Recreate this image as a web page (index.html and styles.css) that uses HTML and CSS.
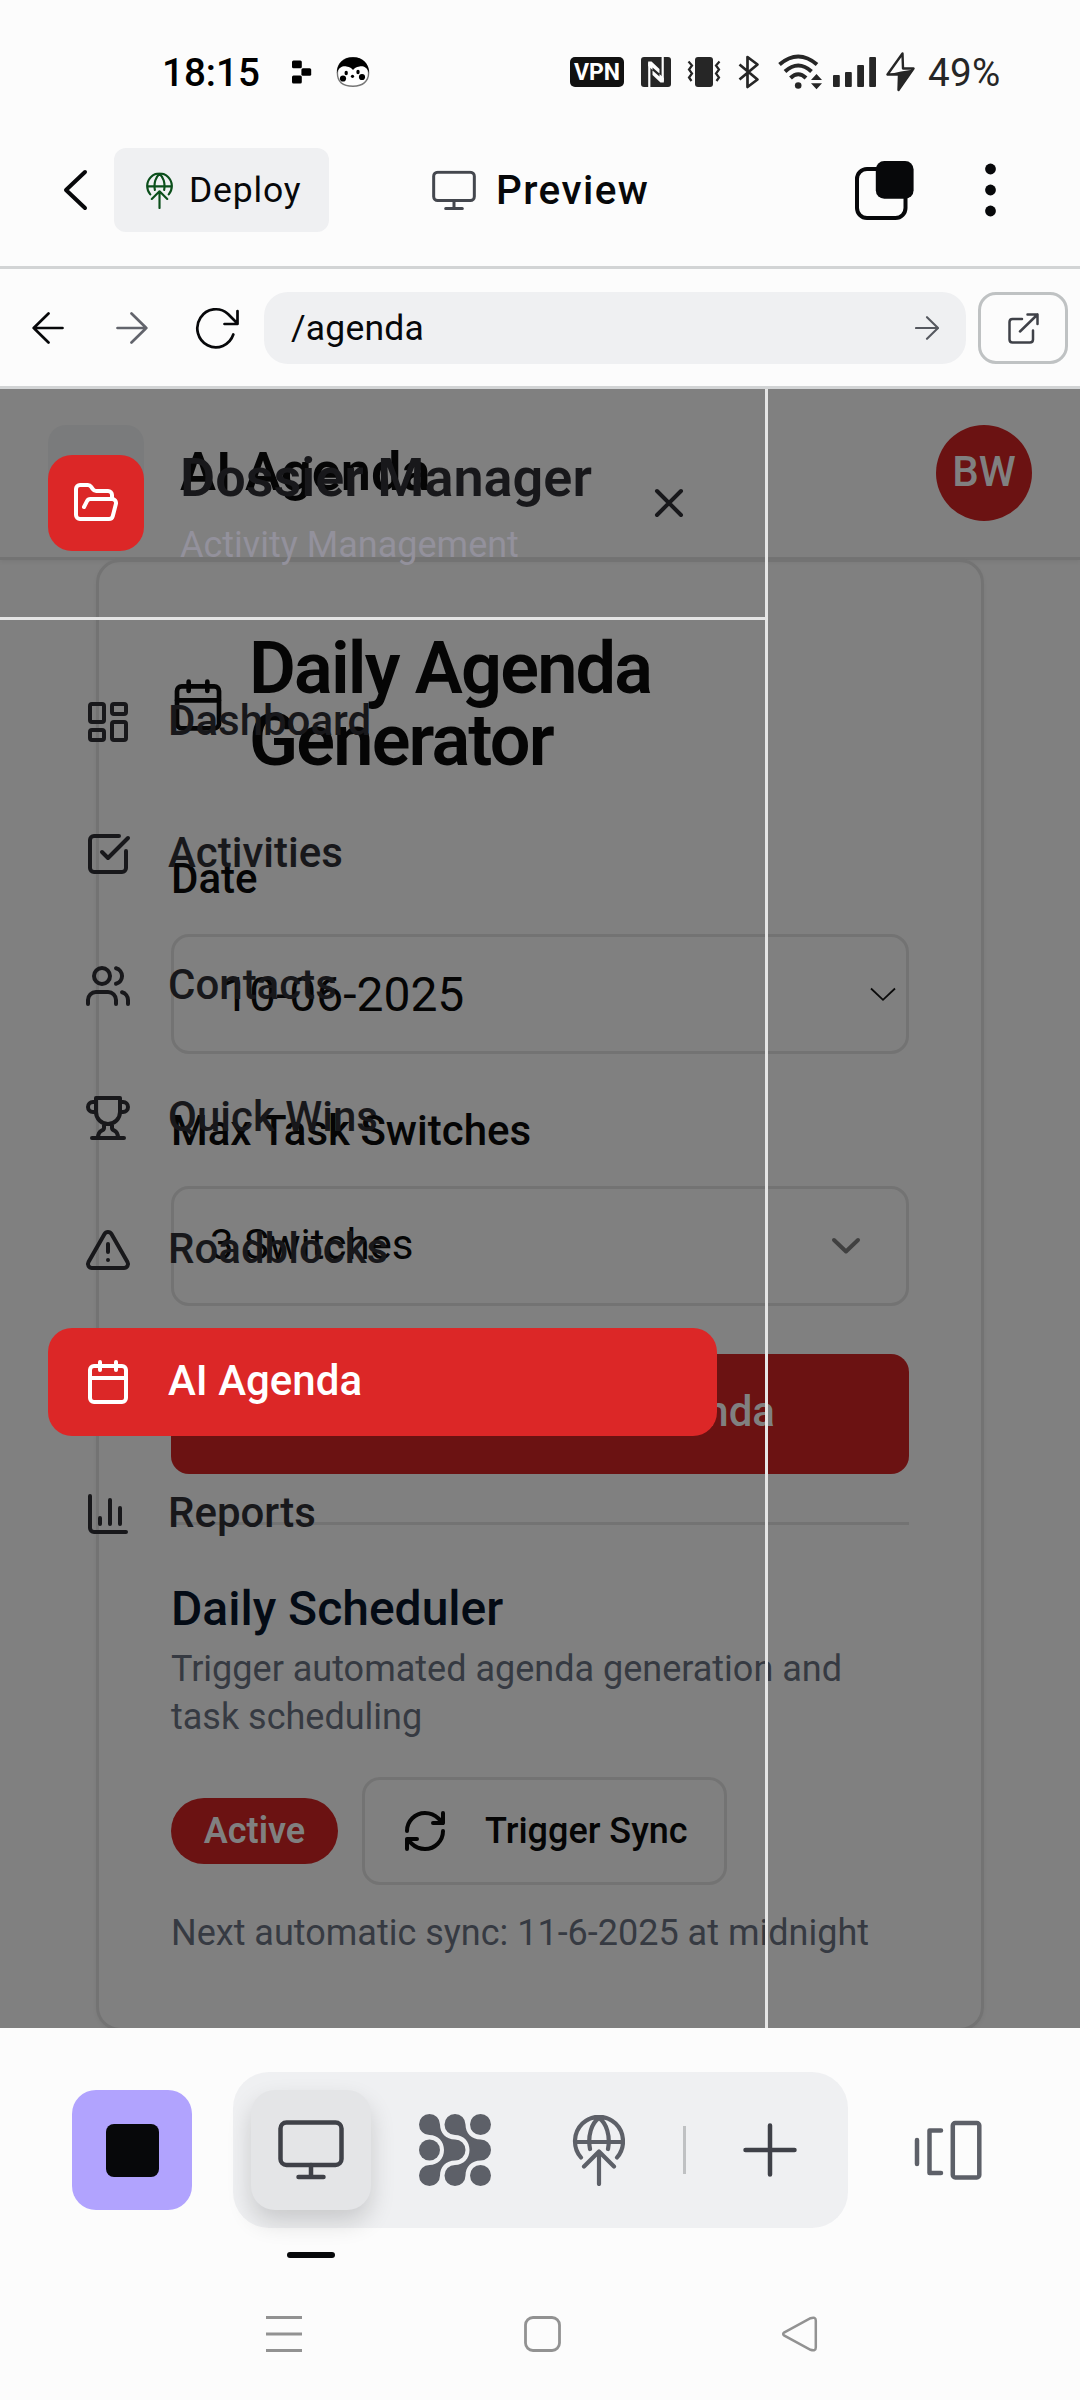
FILE: index.html
```html
<!DOCTYPE html>
<html lang="en">
<head>
<meta charset="utf-8">
<title>Preview</title>
<link rel="stylesheet" href="styles.css">
</head>
<body>
<div class="phone">
  <header class="status">
    <span class="time">18:15</span>
    <svg class="ic-dots" width="20" height="24" viewBox="0 0 20 24"><rect x="0" y="0.5" width="9.8" height="7.8" rx="1.5"/><rect x="9.4" y="8.2" width="9.8" height="7.6" rx="1.5"/><rect x="0" y="15.6" width="9.8" height="7.8" rx="1.5"/></svg>
    <svg class="ic-face" width="34" height="30" viewBox="0 0 34 30"><path d="M17 .8C27 .8 32.6 8 32.6 16S27 29.2 17 29.2 1.4 25 1.4 16 7 .8 17 .8z" fill="#fff" stroke="#777" stroke-width="1.4"/><path d="M.9 16C.9 6.500 7.500.3 17 .3S33.100 6.500 33.100 16C31 10 27 8.800 23.500 9.500 20 10 18.500 11 17 13 15.500 11 14 10 10.500 9.500 7 8.800 3 10 .9 16z"/><circle cx="7" cy="21.500" r="3.100"/><circle cx="26" cy="20" r="3.100"/><ellipse cx="10.200" cy="16" rx="1.700" ry="2.300"/><ellipse cx="22" cy="15" rx="1.700" ry="2.300"/><circle cx="16.500" cy="19.300" r="1.600"/></svg>
    <span class="vpn">VPN</span>
    <svg class="ic-nfc" width="30" height="30" viewBox="0 0 30 30"><rect width="30" height="30" rx="3" fill="#262626"/><path d="M8.300 30V5.500M21.700 0V24.500" fill="none" stroke="#fcfcfc" stroke-width="2.200"/><path d="M7.200 4.500H10.500L18.500 12V16.500L11.500 10.500V13L7.200 9zM22.800 25.500H19.500L11.500 18V13.500L18.500 19.500V17L22.800 21z" fill="#fcfcfc"/></svg>
    <svg class="ic-vib" width="34" height="30" viewBox="0 0 34 30"><rect x="8" width="18" height="30" rx="3" fill="#262626"/><path d="M1.500 4.500L5 8.500 2 12.500 5 16.500 2 20.500 4.500 24M32.500 4.500L29 8.500 32 12.500 29 16.500 32 20.500 29.500 24" fill="none" stroke="#262626" stroke-width="2.200"/></svg>
    <svg class="ic-bt" width="22" height="34" viewBox="0 0 22 34"><path d="M1.500 9.500L19.500 24.500 9.500 32V2L19.500 9.500 1.500 24.500" fill="none" stroke="#262626" stroke-width="2.700" stroke-linejoin="round"/></svg>
    <svg class="ic-wifi" width="45" height="36" viewBox="0 0 45 36"><g fill="none" stroke="#262626" stroke-width="4"><path d="M1.500 10.500Q20.200-5.500 39 10.500"/><path d="M7 17.500Q20.200 5.500 33.500 17.500"/><path d="M12.500 24Q20.200 16.500 28 24"/></g><circle cx="20.200" cy="31.500" r="3.300" fill="#262626"/><path d="M38.500 20l5.500 6H33zM38.500 35.200l5.500-6H33z" fill="#262626"/></svg>
    <svg class="ic-sig" width="43" height="30" viewBox="0 0 43 30" fill="#262626"><rect y="18" width="6.800" height="12" rx="1"/><rect x="12" y="15" width="6.800" height="15" rx="1"/><rect x="24.200" y="8" width="6.800" height="22" rx="1"/><rect x="36.200" width="6.800" height="30" rx="1"/></svg>
    <svg class="ic-bolt" width="30" height="40" viewBox="0 0 30 40"><path d="M16.500 1.500L1.500 22.500 13 22.500 12.500 38 27.500 16.500 17 16.500z" fill="none" stroke="#262626" stroke-width="2.400" stroke-linejoin="round"/><path d="M1.500 22.500H13L12.500 38.500 27.500 17.500 15 19.500z" fill="#262626"/></svg>
    <span class="battery">49%</span>
  </header>

  <div class="appbar">
    <svg class="ic-back" width="25" height="42" viewBox="0 0 25 42" fill="none" stroke="#07080a" stroke-width="4" stroke-linecap="round" stroke-linejoin="round"><path d="M22 3L3 21 22 39"/></svg>
    <div class="deploy">
      <svg width="28" height="37" viewBox="-1 -1 54 72"><use href="#globe-up" stroke="#0b4f1b"/></svg>
      <span>Deploy</span>
    </div>
    <svg class="ic-mon" width="44" height="41" viewBox="0 0 66 60"><use href="#monitor" stroke="#44474e"/></svg>
    <span class="title">Preview</span>
    <svg class="ic-tabs" width="59" height="59" viewBox="0 0 59 59"><rect x="2" y="8" width="48.500" height="49" rx="10" fill="none" stroke="#07080a" stroke-width="4"/><rect x="20.800" width="37.800" height="37.700" rx="8.500" fill="#07080a"/></svg>
    <svg class="ic-more" width="11" height="54" viewBox="0 0 11 54" fill="#07080a"><circle cx="5.500" cy="6" r="5.400"/><circle cx="5.500" cy="27" r="5.400"/><circle cx="5.500" cy="48" r="5.400"/></svg>
  </div>

  <div class="urlbar">
    <svg class="ic-prev" width="32" height="32" viewBox="0 0 32 32" fill="none" stroke="#07080a" stroke-width="2.700" stroke-linecap="round" stroke-linejoin="round"><path d="M16.500 1.500L1.700 16 16.500 30.500M1.700 16H30.500"/></svg>
    <svg class="ic-next" width="32" height="32" viewBox="0 0 32 32" fill="none" stroke="#62646c" stroke-width="2.700" stroke-linecap="round" stroke-linejoin="round"><path d="M15.500 1.500L30.300 16 15.500 30.500M30.300 16H1.500"/></svg>
    <svg class="ic-reload" width="45" height="42" viewBox="0 0 45 42" fill="none" stroke="#07080a" stroke-width="2.700" stroke-linecap="round" stroke-linejoin="round"><path d="M38.300 27.500A18.500 19 0 1 1 33 7L42.500 16.500M42.500 4V17H29.500"/></svg>
    <div class="url">
      <span>/agenda</span>
      <svg width="24" height="24" viewBox="0 0 24 24" fill="none" stroke="#55585f" stroke-width="2.100" stroke-linecap="round" stroke-linejoin="round"><path d="M12 1.200L23 12 12 22.800M23 12H1"/></svg>
    </div>
    <div class="open">
      <svg width="31" height="31" viewBox="0 0 31 31" fill="none" stroke="#3f4148" stroke-width="2.500" stroke-linecap="round" stroke-linejoin="round"><path d="M14 6H4.500Q1.500 6 1.500 9V26.500Q1.500 29.500 4.500 29.500H22Q25 29.500 25 26.500V17.500M19.500 1.500H29.500V11M29.500 1.500L12 18.500"/></svg>
    </div>
  </div>

  <main class="preview">
    <div class="page">
      <div class="page-head">
        <div class="menu-btn"></div>
        <h1>AI Agenda</h1>
        <div class="avatar">BW</div>
      </div>
      <section class="card">
        <div class="card-title">
          <svg width="56" height="56" viewBox="0 0 24 24" class="lucide"><use href="#calendar"/></svg>
          <h2>Daily Agenda<br>Generator</h2>
        </div>
        <label class="label">Date</label>
        <div class="field date"><span>10-06-2025</span>
          <svg width="26" height="15" viewBox="0 0 26 15" fill="none" stroke="#0a0a0a" stroke-width="1.800"><path d="M1 1.500L13 12.800 25 1.500"/></svg></div>
        <label class="label">Max Task Switches</label>
        <div class="field select"><span>3 Switches</span>
          <svg width="30" height="18" viewBox="0 0 30 18" fill="none" stroke="#404040" stroke-width="4" stroke-linecap="round" stroke-linejoin="round"><path d="M3 3L15 14.500 27 3"/></svg></div>
        <div class="generate">Generate AI Agenda</div>
        <hr>
        <h3>Daily Scheduler</h3>
        <p>Trigger automated agenda generation and<br>task scheduling</p>
        <div class="sync-row">
          <span class="badge">Active</span>
          <div class="sync">
            <svg width="48" height="48" viewBox="0 0 24 24" class="lucide"><path d="M3 12a9 9 0 0 1 9-9 9.750 9.750 0 0 1 6.740 2.740L21 8M21 3v5h-5M21 12a9 9 0 0 1-9 9 9.750 9.750 0 0 1-6.740-2.740L3 16M8 16H3v5"/></svg>
            <span>Trigger Sync</span>
          </div>
        </div>
        <p class="next">Next automatic sync: 11-6-2025 at midnight</p>
      </section>
    </div>

    <aside class="drawer">
      <div class="drawer-head">
        <div class="logo"><svg width="48" height="48" viewBox="0 0 24 24" class="lucide"><path d="m6 14 1.500-2.900A2 2 0 0 1 9.240 10H20a2 2 0 0 1 1.940 2.500l-1.540 6a2 2 0 0 1-1.950 1.500H4a2 2 0 0 1-2-2V5a2 2 0 0 1 2-2h3.900a2 2 0 0 1 1.690.900l.810 1.200a2 2 0 0 0 1.670.900H18a2 2 0 0 1 2 2v2"/></svg></div>
        <div class="brand"><div class="brand-name">Dossier Manager</div><div class="brand-sub">Activity Management</div></div>
        <svg class="close lucide" width="48" height="48" viewBox="0 0 24 24"><path d="M18 6 6 18M6 6l12 12"/></svg>
      </div>
      <nav>
        <a><svg width="48" height="48" viewBox="0 0 24 24" class="lucide"><rect x="3" y="3" width="7" height="9" rx="1"/><rect x="14" y="3" width="7" height="5" rx="1"/><rect x="14" y="12" width="7" height="9" rx="1"/><rect x="3" y="16" width="7" height="5" rx="1"/></svg>Dashboard</a>
        <a><svg width="48" height="48" viewBox="0 0 24 24" class="lucide"><path d="M21 10.500V19a2 2 0 0 1-2 2H5a2 2 0 0 1-2-2V5a2 2 0 0 1 2-2h12.500M9 11l3 3L22 4"/></svg>Activities</a>
        <a><svg width="48" height="48" viewBox="0 0 24 24" class="lucide"><path d="M16 21v-2a4 4 0 0 0-4-4H6a4 4 0 0 0-4 4v2M22 21v-2a4 4 0 0 0-3-3.870M16 3.130a4 4 0 0 1 0 7.750"/><circle cx="9" cy="7" r="4"/></svg>Contacts</a>
        <a><svg width="48" height="48" viewBox="0 0 24 24" class="lucide"><path d="M6 9H4.500a2.500 2.500 0 0 1 0-5H6M18 9h1.500a2.500 2.500 0 0 0 0-5H18M4 22h16M10 14.660V17c0 .550-.470.980-.970 1.210C7.850 18.750 7 20.240 7 22M14 14.660V17c0 .550.470.980.970 1.210C16.150 18.750 17 20.240 17 22M18 2H6v7a6 6 0 0 0 12 0V2Z"/></svg>Quick Wins</a>
        <a><svg width="48" height="48" viewBox="0 0 24 24" class="lucide"><path d="m21.730 18-8-14a2 2 0 0 0-3.480 0l-8 14A2 2 0 0 0 4 21h16a2 2 0 0 0 1.730-3M12 9v4M12 17h.010"/></svg>Roadblocks</a>
        <a class="current"><svg width="48" height="48" viewBox="0 0 24 24" class="lucide"><use href="#calendar"/></svg>AI Agenda</a>
        <a><svg width="48" height="48" viewBox="0 0 24 24" class="lucide"><path d="M3 3v16a2 2 0 0 0 2 2h16M18 17V9M13 17V5M8 17v-3"/></svg>Reports</a>
      </nav>
    </aside>
  </main>

  <footer class="dock-row">
    <div class="stop"><i></i></div>
    <div class="dock">
      <div class="tile"><svg width="66" height="60" viewBox="0 0 66 60"><use href="#monitor" stroke="#3f4148"/></svg></div>
      <svg class="ic-grid" width="72" height="72" viewBox="0 0 72 72" fill="#5d6068">
        <circle cx="10.500" cy="36" r="10.500"/><circle cx="61.500" cy="10.500" r="10.500"/><circle cx="61.500" cy="61.500" r="10.500"/>
        <path id="wave" d="M10.500 0A10.500 10.500 0 0 1 21 10.500C21 19 27 25.500 36 25.500A10.500 10.500 0 0 1 36 46.500C27 46.500 21 53 21 61.500A10.500 10.500 0 1 1 10.500 51C19 51 25 44.500 25 36S19 21 10.500 21A10.500 10.500 0 0 1 10.500 0z"/>
        <use href="#wave" x="25.500"/>
      </svg>
      <svg class="ic-globe" width="54" height="72" viewBox="-1 -1 54 72"><use href="#globe-up" stroke="#5d6068"/></svg>
      <i class="rule"></i>
      <svg class="ic-plus" width="54" height="54" viewBox="0 0 54 54" fill="none" stroke="#3f4148" stroke-width="4.500" stroke-linecap="round"><path d="M27 2.500V51.500M2.500 27H51.500"/></svg>
    </div>
    <svg class="ic-deck" width="68" height="60" viewBox="0 0 68 60" fill="none" stroke="#5d6068" stroke-width="4.500" stroke-linecap="round" stroke-linejoin="round"><path d="M3 20V44M27 10.500H15.500V53H27"/><rect x="38.800" y="3" width="26.500" height="54.500" rx="2.500"/></svg>
  </footer>
  <div class="mark"></div>
  <div class="sysnav">
    <svg width="36" height="36" viewBox="0 0 36 36" stroke="#929292" stroke-width="3"><path d="M0 1.600H36M0 18H36M0 34.400H36"/></svg>
    <svg width="37" height="36" viewBox="0 0 37 36" fill="none" stroke="#929292" stroke-width="2.800"><rect x="1.500" y="1.500" width="34" height="33" rx="7.500"/></svg>
    <svg width="36" height="36" viewBox="0 0 36 36" fill="none" stroke="#929292" stroke-width="2.500"><path d="M2.400 16.300L28.500 2.200Q33.800.500 33.800 4.500V31.500Q33.800 35.500 28.500 33.800L2.400 19.700Q0 18 2.400 16.300z"/></svg>
  </div>
</div>

<svg class="defs" width="0" height="0">
  <symbol id="monitor" viewBox="0 0 66 60"><g fill="none" stroke-width="4.500" stroke-linecap="round"><rect x="2.500" y="2.500" width="61" height="42.500" rx="6"/><path d="M33 45V57M20.500 57H45.500"/></g></symbol>
  <symbol id="calendar" viewBox="0 0 24 24"><path d="M8 2v4M16 2v4M3 10h18"/><rect x="3" y="4" width="18" height="18" rx="2"/></symbol>
  <symbol id="globe-up" viewBox="-1 -1 54 72"><g fill="none" stroke-width="4.200" stroke-linecap="round" stroke-linejoin="round"><path d="M8 41.500A24 24.500 0 1 1 44 41.500M2 26H50M26 36V68M11 50.500L26 35.500 41 50.500M17 33C14.500 20 18.500 7 26 2 33.500 7 37.500 20 35 33"/></g></symbol>
</svg>
</body>
</html>
```
FILE: styles.css
```css
* { box-sizing: border-box; }
body { margin: 0; background: #fcfcfc; font-family: Roboto, sans-serif; color: #07080a; }
h1, h2, h3, p { margin: 0; }
svg { display: block; flex: none; }
.defs { position: absolute; }
.lucide { fill: none; stroke: currentColor; stroke-width: 2; stroke-linecap: round; stroke-linejoin: round; }
.phone { width: 1080px; height: 2400px; overflow: hidden; display: flex; flex-direction: column; background: #fcfcfc; }

/* Status bar */
.status { height: 146px; flex: none; display: flex; align-items: center; padding: 0 0 2px 162px; }
.time { width: 130px; font-size: 38.6px; font-weight: 500; color: #000; }
.ic-face { margin-left: 24px; }
.vpn { width: 54px; height: 30px; margin-left: 200px; border-radius: 5px; background: #111; color: #fff; font-size: 23px; font-weight: 700; line-height: 31px; text-align: center; }
.ic-nfc { margin-left: 17px; }
.ic-vib { margin-left: 16px; }
.ic-bt { margin-left: 17px; }
.ic-wifi { margin-left: 18px; }
.ic-sig { margin-left: 10px; }
.ic-bolt { margin-left: 10px; }
.battery { margin-left: 12px; font-size: 38.6px; letter-spacing: .3px; color: #262626; white-space: nowrap; }

/* App bar */
.appbar { height: 123px; flex: none; display: flex; align-items: center; padding: 0 0 32px 63px; border-bottom: 3px solid #d2d4d5; }
.deploy { width: 215px; height: 84px; margin-left: 26px; border-radius: 12px; background: #eff0f2; display: flex; align-items: center; padding-left: 31px; font-size: 35.5px; letter-spacing: .8px; }
.deploy span { margin-left: 16px; }
.ic-mon { margin-left: 103px; }
.title { width: 359px; margin-left: 20px; font-size: 40.5px; font-weight: 500; letter-spacing: 1.4px; }
.ic-more { margin-left: 71px; }

/* Address bar */
.urlbar { height: 120px; flex: none; display: flex; align-items: center; padding: 1px 12px 0 32px; border-bottom: 3px solid #d2d4d5; }
.ic-next { margin-left: 52px; }
.ic-reload { margin-left: 47px; }
.url { width: 702px; height: 72px; margin-left: 24px; border-radius: 24px; background: #eff0f2; display: flex; align-items: center; justify-content: space-between; padding: 0 27px; font-size: 35.5px; letter-spacing: .2px; }
.open { width: 90px; height: 72px; margin-left: 12px; border: 3px solid #bfc2c3; border-radius: 18px; display: flex; align-items: center; justify-content: center; }

/* Previewed page, dimmed behind the drawer */
.preview { position: relative; height: 1639px; flex: none; overflow: hidden; background: #808080; }
.page-head { height: 171px; display: flex; align-items: center; padding: 0 48px; border-bottom: 3px solid #737373; box-shadow: 0 2px 4px rgba(0,0,0,.06); }
.menu-btn { width: 96px; height: 96px; border-radius: 18px; background: #7a7b7c; }
.page-head h1 { flex: 1; margin-left: 36px; padding-bottom: 4px; font-size: 54px; font-weight: 600; color: #050505; }
.avatar { width: 96px; height: 96px; border-radius: 50%; background: #6b1212; color: #808080; font-size: 42px; font-weight: 500; line-height: 94px; text-align: center; }
.card { width: 888px; height: 1472px; margin: -1px 0 0 96px; padding: 71px 72px 0; border: 3px solid #737373; border-radius: 24px; box-shadow: 0 2px 4px rgba(0,0,0,.05); color: #050505; }
.card-title { display: flex; align-items: center; gap: 23px; }
.card-title svg { margin-left: -1px; }
.card-title h2 { font-size: 72px; line-height: 72px; font-weight: 600; letter-spacing: -1.800px; }
.label { display: block; font-size: 42px; line-height: 42px; font-weight: 500; margin-top: 81px; }
.field { height: 120px; margin-top: 34px; border: 3px solid #737373; border-radius: 18px; display: flex; align-items: center; justify-content: space-between; }
.date { padding: 0 10px 0 48px; font-size: 48px; }
.date + .label { margin-top: 56px; }
.select { padding: 0 45px 0 36px; font-size: 42px; }
.select span { padding-bottom: 4px; }
.generate { height: 120px; margin-top: 48px; padding: 0 134px; border-radius: 18px; background: #6b1212; color: #808080; font-size: 42px; font-weight: 500; line-height: 115px; text-align: right; }
hr { height: 3px; margin: 48px 0 0; border: 0; background: #737373; }
h3 { margin-top: 48px; font-size: 48px; line-height: 72px; font-weight: 500; color: #040b15; }
p { font-size: 36px; line-height: 48px; color: #363a42; white-space: nowrap; }
.sync-row { display: flex; align-items: center; gap: 24px; margin-top: 36px; }
.badge { width: 167px; height: 66px; border-radius: 33px; background: #6b1212; color: #808080; font-size: 36px; font-weight: 600; line-height: 66px; text-align: center; }
.sync { width: 365px; height: 108px; border: 3px solid #737373; border-radius: 18px; display: flex; align-items: center; padding-left: 36px; font-size: 36px; font-weight: 500; white-space: nowrap; }
.sync span { margin-left: 36px; }
.next { margin-top: 24px; }

/* Drawer */
.drawer { position: absolute; left: 0; top: 0; width: 768px; height: 100%; border-right: 3px solid #e5e5e5; color: #18181b; }
.drawer-head { height: 231px; border-bottom: 3px solid #e5e5e5; display: flex; align-items: center; padding: 0 72px 0 48px; }
.logo { width: 96px; height: 96px; border-radius: 24px; background: #dc2727; color: #fff; display: flex; align-items: center; justify-content: center; }
.brand { flex: 1; margin-left: 36px; white-space: nowrap; }
.brand-name { padding-bottom: 3px; font-size: 54px; line-height: 81px; font-weight: 600; }
.brand-sub { font-size: 36px; line-height: 48px; color: #93919c; }
nav { padding: 48px 48px 0; display: flex; flex-direction: column; gap: 24px; }
nav a { height: 108px; border-radius: 24px; display: flex; align-items: center; gap: 36px; padding: 0 0 2px 36px; font-size: 42px; font-weight: 500; line-height: 60px; }
nav svg { margin-top: 2px; }
nav .current { background: #dc2727; color: #fff; }

/* Bottom dock */
.dock-row { height: 200px; flex: none; display: flex; align-items: center; padding: 44px 0 0 72px; }
.stop { width: 120px; height: 120px; border-radius: 24px; background: #b1a3fe; display: flex; align-items: center; justify-content: center; }
.stop i { width: 53px; height: 53px; border-radius: 8px; background: #07080a; }
.dock { width: 615px; height: 156px; margin-left: 41px; border-radius: 36px; background: #eff0f2; display: flex; align-items: center; padding-left: 18px; }
.tile { width: 120px; height: 120px; border-radius: 24px; background: #e4e5e7; box-shadow: 0 12px 24px rgba(0,0,0,.16); display: flex; align-items: center; justify-content: center; }
.ic-grid { margin-left: 48px; }
.ic-globe { margin-left: 80px; }
.rule { width: 3px; height: 48px; margin-left: 58px; background: #bfc1c3; }
.ic-plus { margin-left: 57px; }
.ic-deck { margin-left: 66px; }
.mark { width: 48px; height: 6px; margin: 24px 0 0 287px; flex: none; border-radius: 3px; background: #07080a; }
.sysnav { display: flex; justify-content: space-between; padding: 58px 262px 0 266px; }
```
